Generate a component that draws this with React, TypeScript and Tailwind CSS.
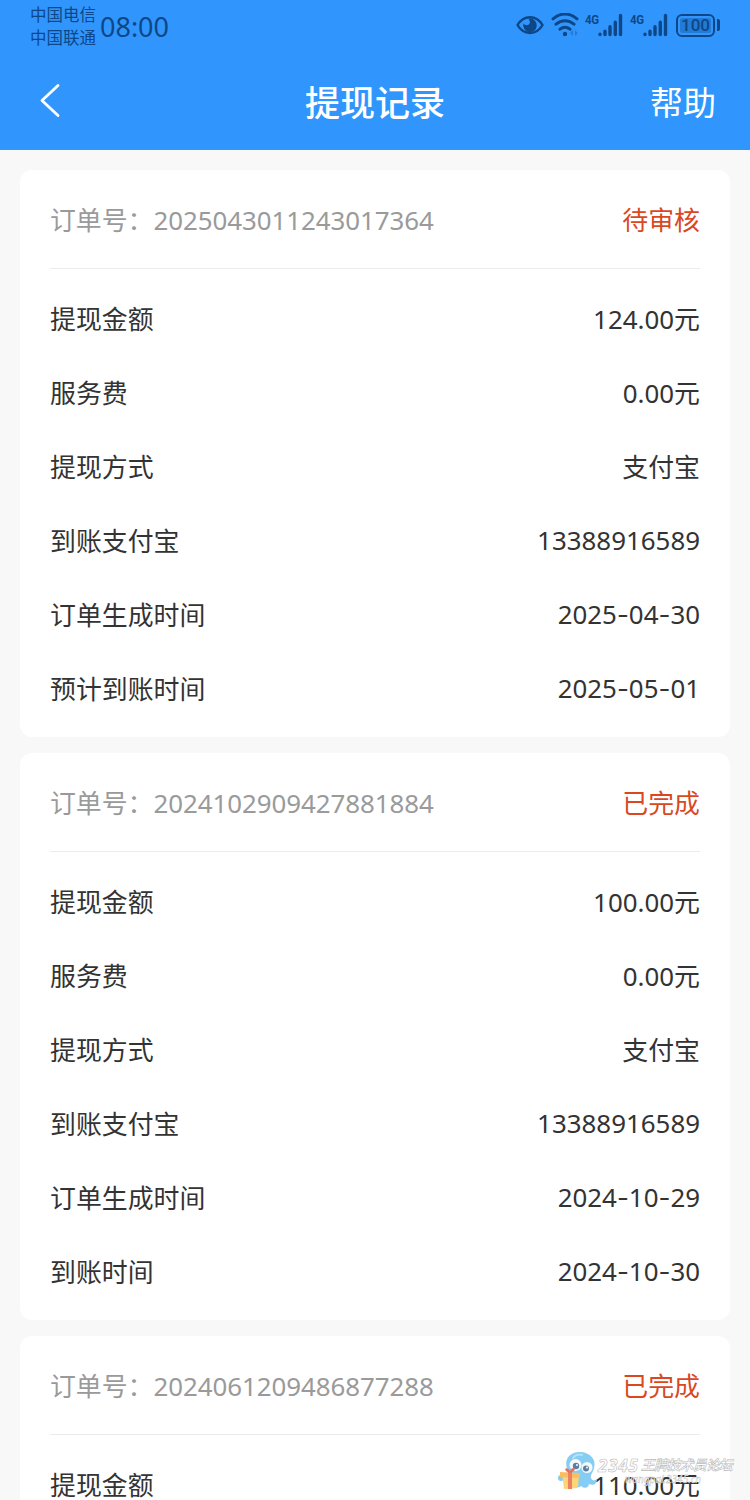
import { Fragment } from "react";

type OrderRow = { label: string; value: string };

type Order = {
    id: string;
    status: string;
    rows: OrderRow[];
};

const orders: Order[] = [
    {
        id: "2025043011243017364",
        status: "待审核",
        rows: [
            { label: "提现金额", value: "124.00元" },
            { label: "服务费", value: "0.00元" },
            { label: "提现方式", value: "支付宝" },
            { label: "到账支付宝", value: "13388916589" },
            { label: "订单生成时间", value: "2025-04-30" },
            { label: "预计到账时间", value: "2025-05-01" },
        ],
    },
    {
        id: "2024102909427881884",
        status: "已完成",
        rows: [
            { label: "提现金额", value: "100.00元" },
            { label: "服务费", value: "0.00元" },
            { label: "提现方式", value: "支付宝" },
            { label: "到账支付宝", value: "13388916589" },
            { label: "订单生成时间", value: "2024-10-29" },
            { label: "到账时间", value: "2024-10-30" },
        ],
    },
    {
        id: "2024061209486877288",
        status: "已完成",
        rows: [{ label: "提现金额", value: "110.00元" }],
    },
];

function SignalIcon() {
    return (
        <div className="flex items-start">
            <span className="-mt-px -mr-px w-[14px] origin-top-left scale-y-[1.150] font-['Roboto',sans-serif] text-[11.500px] leading-[12px] font-bold tracking-[-0.3px]">4G</span>
            <svg width="25" height="24" viewBox="0 0 25 24" fill="none" stroke="currentColor" strokeWidth="3.4" strokeLinecap="round">
                <path d="M2 21.200v.4M7 18.200v3.400M12 13.800v7.800M17.300 9.200v12.400M22.500 2.500v19.100" />
            </svg>
        </div>
    );
}

function StatusBar() {
    return (
        <div className="flex h-[52px] justify-between px-[30px] text-[#0d4788]">
            <div className="flex">
                <div className="pt-[3px] text-[16.500px] leading-[23px]">
                    <p>中国电信</p>
                    <p>中国联通</p>
                </div>
                <span className="ml-[4px] pt-[12px] text-[27px] leading-[30px]">08:00</span>
            </div>
            <div className="flex pt-[13px]">
                <svg width="28" height="24" viewBox="0 0 28 24" fill="none">
                    <path d="M1.500 12C7.500 1.500 20.500 1.500 26.500 12C20.500 22.500 7.500 22.500 1.500 12Z" stroke="currentColor" strokeWidth="2.500" strokeLinejoin="round" />
                    <path d="M14 5.500a6.800 6.800 0 1 1-6.500 4.800c1 2.500 5.300 2.600 6.200 0 .5-1.600-.1-3-1.500-4.500Z" fill="currentColor" />
                </svg>
                <svg className="ml-[7px]" width="29" height="24" viewBox="0 0 29 24" fill="none" stroke="currentColor" strokeWidth="3" strokeLinecap="round">
                    <path d="M2 5.800C9.500-.600 18.500-.600 26 5.800M5 11.200c5.400-4.600 12.600-4.600 18 0M9 16.200c3-2.500 7-2.500 10 0" />
                    <circle cx="14" cy="21" r="2.200" fill="currentColor" stroke="none" />
                    <path d="m22 17-3 3 3 3zM24 17l3 3-3 3z" fill="currentColor" stroke="none" opacity=".35" />
                </svg>
                <div className="ml-[5px] flex gap-[7px]">
                    <SignalIcon />
                    <SignalIcon />
                </div>
                <div className="ml-[8px] flex h-[24px] items-center gap-[2px]">
                    <div className="flex h-[23px] w-[39px] rounded-[6px] border-[2px] border-current p-[2px]">
                        <span className="flex flex-1 items-center justify-center rounded-[2px] bg-[#1d69bb]/60 font-['Roboto',sans-serif] text-[17px] leading-[17px] font-medium">100</span>
                    </div>
                    <span className="h-[12px] w-[3px] rounded-r-[2px] bg-current" />
                </div>
            </div>
        </div>
    );
}

function NavBar() {
    return (
        <div className="grid h-[98px] grid-cols-3 items-center px-[34px] text-white">
            <svg className="-mt-[2px] ml-[5px]" width="24" height="36" viewBox="0 0 24 36" fill="none" stroke="currentColor" strokeWidth="2.800" strokeLinecap="round" strokeLinejoin="round">
                <path d="M19 3.500 3 18.500 19 33.500" />
            </svg>
            <h1 className="pt-[4px] text-center text-[35px] leading-[44px] font-medium">提现记录</h1>
            <span className="pt-[4px] text-right text-[33px] leading-[44px]">帮助</span>
        </div>
    );
}

// Dates use a wider hyphen than the digit font has
function Value({ text }: { text: string }) {
    return (
        <span className={/^[\d-]+$/.test(text) ? "pb-[2px]" : ""}>
            {text.split("-").map((part, i) => (
                <Fragment key={i}>
                    {i > 0 && <span className="font-['Inter',sans-serif]">-</span>}
                    {part}
                </Fragment>
            ))}
        </span>
    );
}

function OrderCard({ order }: { order: Order }) {
    return (
        <section className="rounded-[12px] bg-white px-[30px] pb-[11px]">
            <div className="flex h-[99px] items-center justify-between border-b border-[#ececec] pt-px">
                <p className="tracking-[-0.05px] text-[#9a9a9a]">订单号：{order.id}</p>
                <span className="text-[#d9481f]">{order.status}</span>
            </div>
            <div className="pt-[13px]">
                {order.rows.map(row => (
                    <div key={row.label} className="flex h-[74px] items-center justify-between">
                        <span>{row.label}</span>
                        <Value text={row.value} />
                    </div>
                ))}
            </div>
        </section>
    );
}

function Watermark() {
    return (
        <div className="absolute top-[1450px] left-[558px] flex">
            <svg width="40" height="42" viewBox="0 0 40 42">
                <path d="M9 18C6 8 13 2 22 2s17 7 14 16c-1 5-4 7-3 10 1 3 4 3 6 1 0 5-4 7-8 5 0 4-5 5-8 2-4 3-9 1-8-4-6-2-5-9-6-14Z" fill="#86cdf3" />
                <path d="M15 8c2-3 6-4 9-3" stroke="#b5e2f8" strokeWidth="2" fill="none" strokeLinecap="round" />
                <circle cx="17.500" cy="15" r="6" fill="#f4fafc" />
                <circle cx="29" cy="17.500" r="5.500" fill="#f4fafc" />
                <circle cx="18" cy="16" r="3.200" fill="#5e7f9e" />
                <circle cx="28" cy="18.500" r="3" fill="#5e7f9e" />
                <circle cx="19" cy="15" r="1" fill="#fff" />
                <circle cx="29" cy="17.500" r="1" fill="#fff" />
                <circle cx="3" cy="28" r="3" fill="#86cdf3" />
                <path d="m4 23 17 1-1 14-14 1Z" fill="#fbd577" />
                <path d="m2 22 20 1v5L2 27Z" fill="#f9bd62" />
                <path d="M10 22h4v17h-4Z" fill="#ee7f63" />
                <path d="M12 23c-9-3-3-8 0-2 2-6 10-2 0 2Z" fill="#e86e60" />
            </svg>
            <div className="pt-[7px] font-bold whitespace-nowrap text-white italic [-webkit-text-stroke:0.6px_#bbbbbb]">
                <p className="flex text-[13.500px] leading-[17px] tracking-[-0.5px]">
                    <span className="w-[43px] text-[17px] tracking-[0.8px]">2345</span>王牌技术员论坛
                </p>
                <p className="pl-[27px] text-[10px] leading-[10px] font-normal [-webkit-text-stroke:0.3px_#aaaaaa]">wangpai.2345.cn</p>
            </div>
        </div>
    );
}

export default function App() {
    return (
        <div lang="zh-CN" className="relative h-[1500px] w-[750px] overflow-hidden bg-[#f8f8f8] font-['Noto_Sans','Noto_Sans_CJK_SC',sans-serif] text-[25.900px] leading-[36px] text-[#333333]">
            <header className="h-[150px] bg-[#3096fd]">
                <StatusBar />
                <NavBar />
            </header>
            <main className="flex flex-col gap-4 px-5 pt-5">
                {orders.map(order => (
                    <OrderCard key={order.id} order={order} />
                ))}
            </main>
            <Watermark />
        </div>
    );
}
